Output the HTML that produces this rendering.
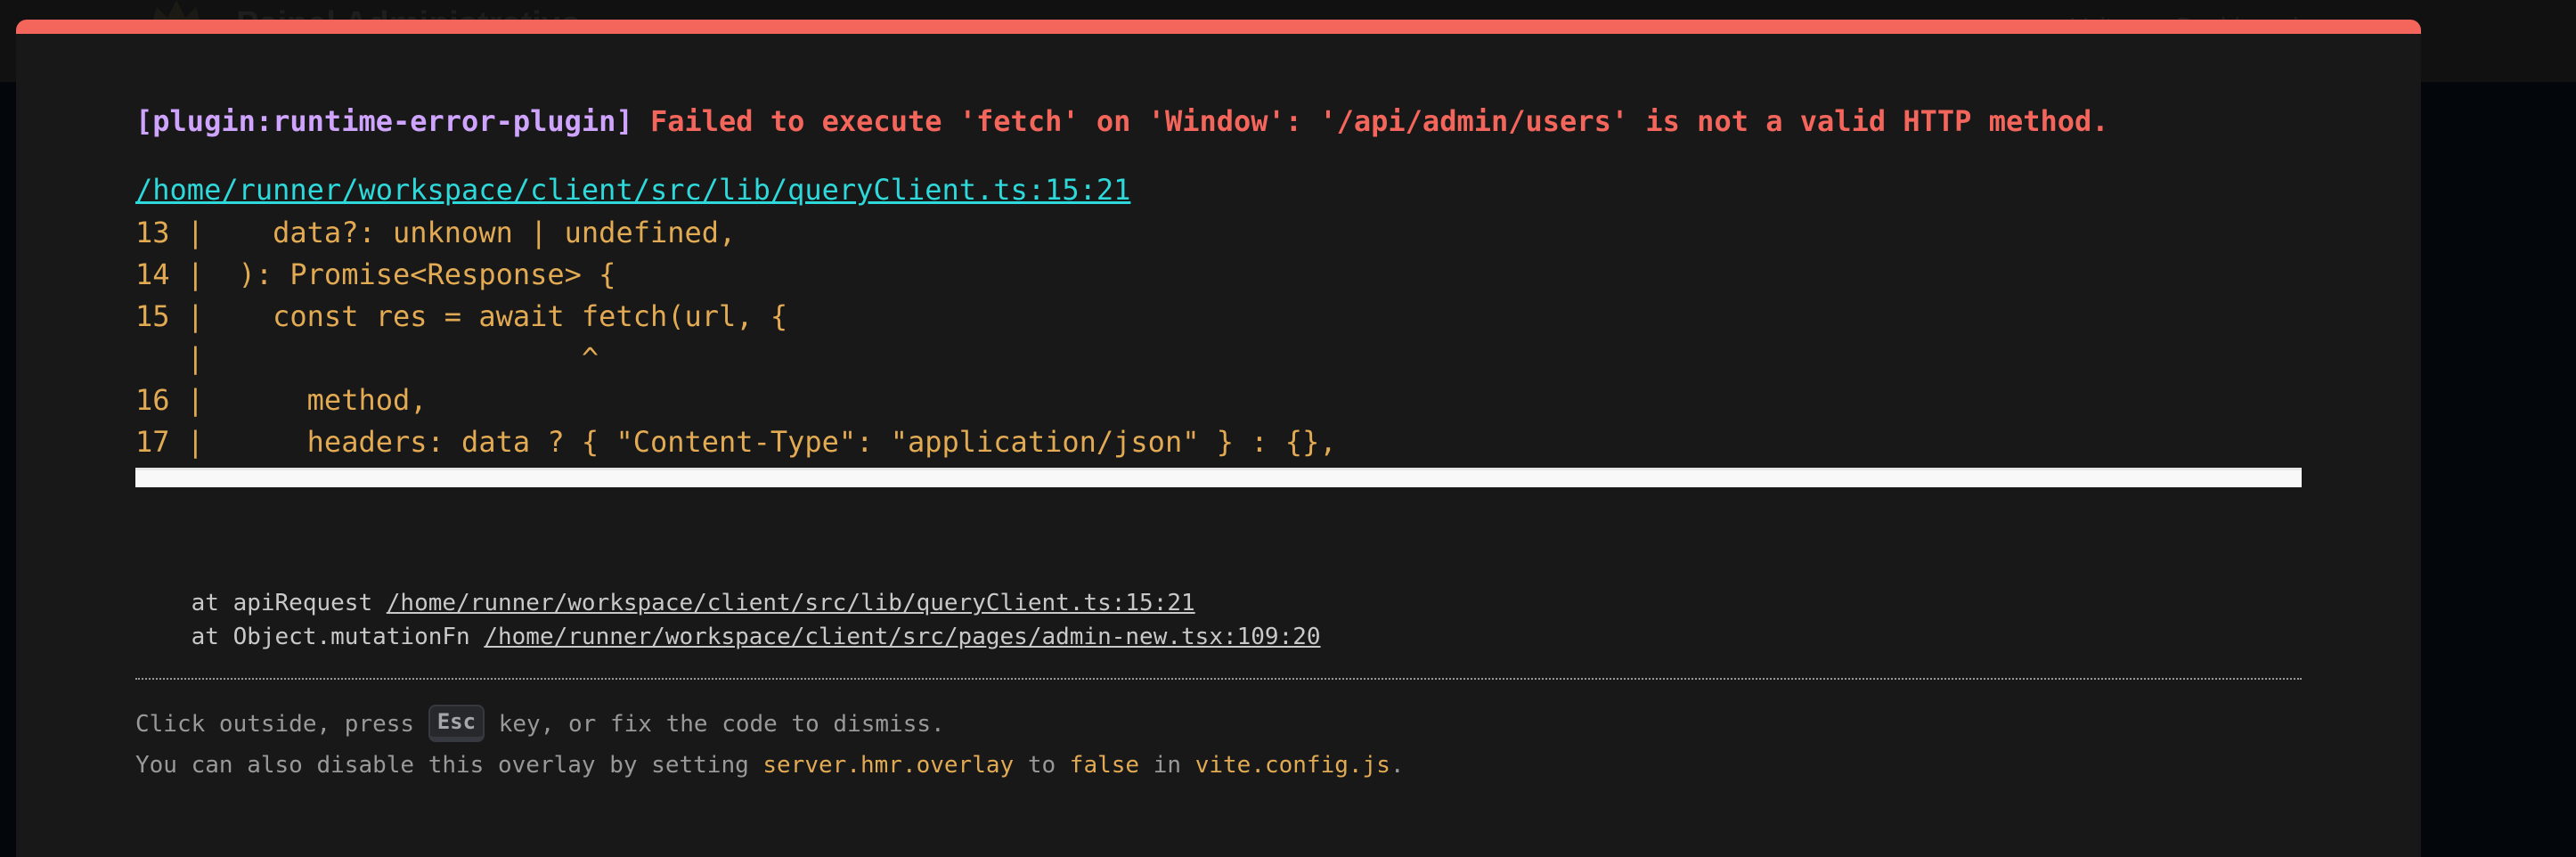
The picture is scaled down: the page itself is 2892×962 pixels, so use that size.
<!DOCTYPE html>
<html><head><meta charset="utf-8"><style>
html,body{margin:0;padding:0;width:2892px;height:948px;overflow:hidden;background:#03060a;}
.hdr{position:absolute;left:0;top:0;width:2892px;height:92px;background:#111111;}
.hdr .t{position:absolute;left:265px;top:6px;font:600 38px "Liberation Sans",sans-serif;color:#1e1e1e;}
.hdr .r{position:absolute;left:2300px;top:14px;font:28px "Liberation Sans",sans-serif;color:#1e1e1e;}
.win{position:absolute;left:18px;top:22px;width:2700px;height:940px;background:#181818;border-top:16px solid #f4665c;border-radius:12px 12px 0 0;box-sizing:border-box;}
.l{position:absolute;left:152px;white-space:pre;font-family:"DejaVu Sans Mono","Liberation Mono",monospace;}
.m{font-size:32px;line-height:48px;font-weight:bold;}
.c{font-size:32px;line-height:47px;color:#e2aa53;}
.s{font-size:26px;line-height:38px;color:#c9c9c9;}
.tip{font-size:26px;line-height:38px;color:#999;}
.kbd{display:inline-block;background:#26282c;color:#a6a7ab;border:2px solid #363940;border-bottom-width:6px;border-radius:8px;font-weight:bold;font-size:24px;line-height:34px;padding:0 8px;vertical-align:middle;margin-top:-4px;}
.y{color:#e2aa53;}
</style></head><body>
<div class="hdr"><svg style="position:absolute;left:166px;top:0" width="64" height="30" viewBox="0 0 64 30"><path d="M4 28 L10 8 L22 20 L32 0 L42 20 L54 8 L60 28 Z" fill="#1c1a14"/></svg><div class="t">Painel Administrativo</div><div class="r">‹ &nbsp;Voltar ao Dashboard</div></div>
<div class="win"></div>
<div class="l m" style="top:112px"><span style="color:#cfa4ff">[plugin:runtime-error-plugin]</span> <span style="color:#f4665c">Failed to execute 'fetch' on 'Window': '/api/admin/users' is not a valid HTTP method.</span></div>
<div class="l c" style="top:190px;color:#2dd9da;text-decoration:underline">/home/runner/workspace/client/src/lib/queryClient.ts:15:21</div>
<div class="l c" style="top:238px">13 |    data?: unknown | undefined,</div>
<div class="l c" style="top:285px">14 |  ): Promise&lt;Response&gt; {</div>
<div class="l c" style="top:332px">15 |    const res = await fetch(url, {</div>
<div class="l c" style="top:379px">   |                      ^</div>
<div class="l c" style="top:426px">16 |      method,</div>
<div class="l c" style="top:473px">17 |      headers: data ? { "Content-Type": "application/json" } : {},</div>
<div style="position:absolute;left:152px;top:525px;width:2432px;height:22px;background:#f8f8f8;border-top:3px solid #e6e6e6;box-sizing:border-box"></div>
<div class="l s" style="top:658px">    at apiRequest <u>/home/runner/workspace/client/src/lib/queryClient.ts:15:21</u></div>
<div class="l s" style="top:696px">    at Object.mutationFn <u>/home/runner/workspace/client/src/pages/admin-new.tsx:109:20</u></div>
<div style="position:absolute;left:152px;top:761px;width:2432px;border-top:2px dotted #999"></div>
<div class="l tip" style="top:794px">Click outside, press <span class="kbd">Esc</span> key, or fix the code to dismiss.</div>
<div class="l tip" style="top:840px">You can also disable this overlay by setting <span class="y">server.hmr.overlay</span> to <span class="y">false</span> in <span class="y">vite.config.js</span>.</div>
</body></html>
